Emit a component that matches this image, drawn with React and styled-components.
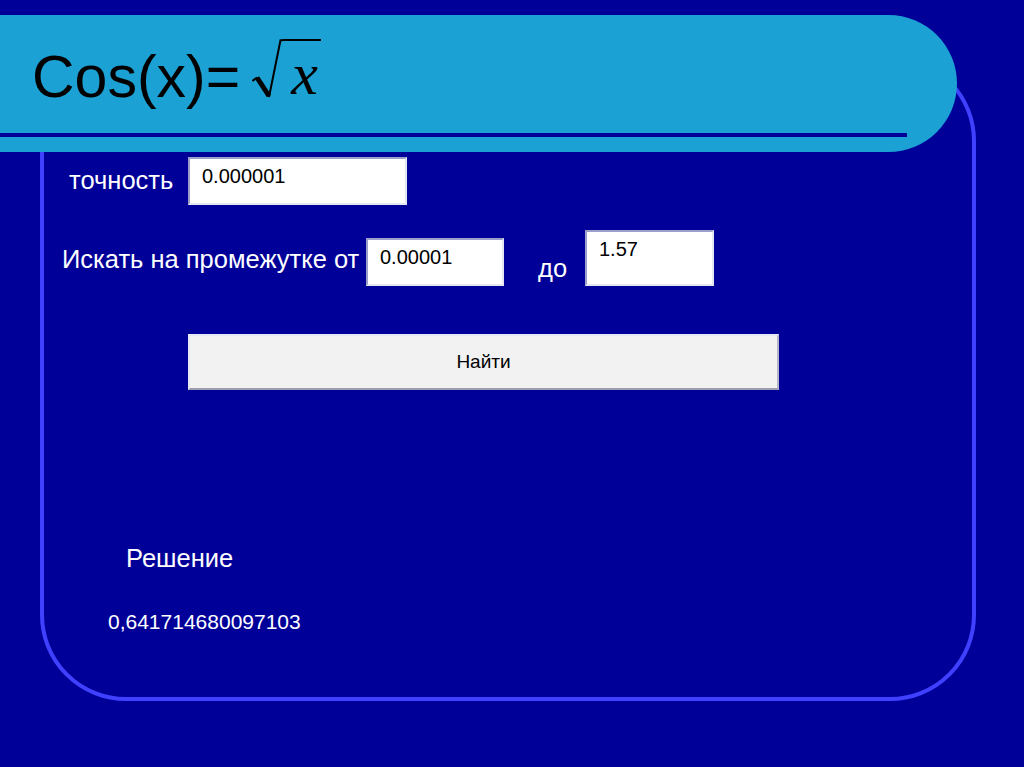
import React from "react";
import styled, { createGlobalStyle } from "styled-components";

const GlobalStyle = createGlobalStyle`
  html, body {
    margin: 0;
    padding: 0;
    background: #000099;
  }
  body {
    font-family: "Liberation Sans", Arial, sans-serif;
  }
`;

const Slide = styled.div`
  width: 1024px;
  height: 767px;
  background: #000099;
  overflow: hidden;
`;

const Header = styled.div`
  position: relative;
  z-index: 1;
  margin-top: 15px;
  width: 957px;
  height: 137px;
  box-sizing: border-box;
  padding-top: 24px;
  background: #1ba1d3;
  border-radius: 0 69px 69px 0;
  display: flex;
  flex-direction: column;
`;

const TitleRow = styled.div`
  display: flex;
  align-items: flex-start;
  padding-left: 32px;
`;

const Title = styled.h1`
  margin: 9px 0 0;
  font-family: "Liberation Sans", Arial, sans-serif;
  font-weight: normal;
  font-size: 59px;
  line-height: 1;
  color: #000;
`;

const Sqrt = styled.div`
  display: flex;
  align-items: flex-start;
  margin-left: 12px;
`;

const Radicand = styled.span`
  display: block;
  width: 30px;
  padding: 3px 0 0 8px;
  border-top: 2.5px solid #000;
  font-family: "Liberation Serif", "Times New Roman", serif;
  font-style: italic;
  font-size: 60px;
  line-height: 1;
  color: #000;
`;

const Rule = styled.div`
  margin-top: auto;
  margin-bottom: 15px;
  width: 907px;
  height: 4px;
  background: #000099;
`;

const Frame = styled.div`
  margin: -97px 0 0 40px;
  width: 936px;
  height: 646px;
  box-sizing: border-box;
  border: 4px solid #4040ff;
  border-radius: 86px;
  padding-top: 98px;
  display: flex;
  flex-direction: column;
`;

const Row = styled.div`
  display: flex;
  align-items: ${(p) => p.$align || "center"};
  padding-left: ${(p) => p.$indent}px;
  margin-top: ${(p) => p.$top || 0}px;
`;

const Label = styled.label`
  display: block;
  flex: none;
  box-sizing: border-box;
  width: ${(p) => p.$width}px;
  padding-left: ${(p) => p.$pad || 0}px;
  margin-bottom: ${(p) => p.$bottom || 0}px;
  color: #fff;
  font-size: 25.5px;
  line-height: 1;
  white-space: nowrap;
`;

const Field = styled.input`
  flex: none;
  box-sizing: border-box;
  width: ${(p) => p.$width}px;
  height: ${(p) => p.$height}px;
  margin: 0;
  padding: 7px 12px ${(p) => p.$height - 31}px;
  border-style: solid;
  border-width: 2px;
  border-color: #9a9ec8 #e4e6f2 #e4e6f2 #9a9ec8;
  background: #fff;
  color: #000;
  font-family: "Liberation Sans", Arial, sans-serif;
  font-size: 20px;
  line-height: 20px;
  outline: none;
`;

const FindButton = styled.button`
  box-sizing: border-box;
  width: 591px;
  height: 56px;
  margin: 48px 0 0 144px;
  border-style: solid;
  border-width: 2px;
  border-color: #e6e8f4 #b4b6c8 #9c9eb0 #e6e8f4;
  background: #f2f2f2;
  color: #000;
  font-family: "Liberation Sans", Arial, sans-serif;
  font-size: 19px;
  cursor: pointer;
`;

const SectionTitle = styled.div`
  margin: 156px 0 0 82px;
  color: #fff;
  font-size: 25.5px;
  line-height: 1;
`;

const Result = styled.div`
  margin: 39px 0 0 64px;
  color: #fff;
  font-size: 21px;
  line-height: 1;
`;

const RadicalSign = () => (
  <svg width="31" height="60" viewBox="0 0 31 60" fill="none" stroke="#000">
    <path d="M0.5 42 L5 38.5" strokeWidth="2" />
    <path d="M5 38.5 L17 57" strokeWidth="5" />
    <path d="M17 58 L28.5 1.2 L31 1.2" strokeWidth="2" />
  </svg>
);

export default function App() {
  return (
    <Slide>
      <GlobalStyle />
      <Header>
        <TitleRow>
          <Title>Cos(x)=</Title>
          <Sqrt>
            <RadicalSign />
            <Radicand>x</Radicand>
          </Sqrt>
        </TitleRow>
        <Rule />
      </Header>
      <Frame>
        <Row $indent={25}>
          <Label $width={119}>точность</Label>
          <Field $width={219} $height={48} defaultValue="0.000001" />
        </Row>
        <Row $indent={18} $top={25} $align="flex-end">
          <Label $width={304} $bottom={14}>
            Искать на промежутке от
          </Label>
          <Field $width={138} $height={48} defaultValue="0.00001" />
          <Label $width={81} $pad={34} $bottom={5}>
            до
          </Label>
          <Field $width={129} $height={56} defaultValue="1.57" />
        </Row>
        <FindButton>Найти</FindButton>
        <SectionTitle>Решение</SectionTitle>
        <Result>0,641714680097103</Result>
      </Frame>
    </Slide>
  );
}
